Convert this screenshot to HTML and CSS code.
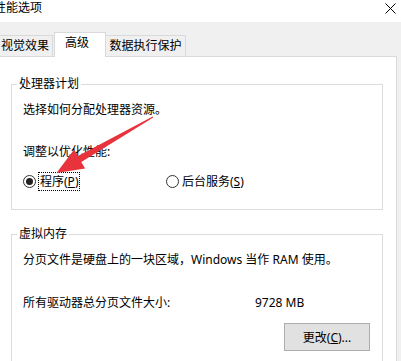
FILE: index.html
```html
<!DOCTYPE html>
<html lang="zh-CN">

<head>
  <meta charset="UTF-8">
  <meta name="viewport" content="width=device-width, initial-scale=1.0">
  <title>性能选项</title>
  <link rel="stylesheet" href="styles.css">
</head>

<body>
  <div class="window">
    <div class="titlebar">
      <span class="title">性能选项</span>
      <svg class="close" width="11" height="11" viewBox="0 0 11 11">
        <path d="M0.5 0.5 L10.5 10.5 M10.5 0.5 L0.5 10.5" stroke="#000" stroke-width="1" fill="none" />
      </svg>
    </div>

    <div class="tabs">
      <div class="tab tab_1">视觉效果</div>
      <div class="tab tab_2 active">高级</div>
      <div class="tab tab_3">数据执行保护</div>
    </div>

    <div class="panel">
      <fieldset class="group cpu">
        <legend>处理器计划</legend>
        <p class="line">选择如何分配处理器资源。</p>
        <p class="line adjust">调整以优化性能:</p>
        <div class="radios">
          <label class="radio radio_1">
            <span class="dot checked"></span>
            <span class="focus">程序(<u>P</u>)</span>
          </label>
          <label class="radio">
            <span class="dot"></span>
            <span class="label">后台服务(<u>S</u>)</span>
          </label>
        </div>
      </fieldset>

      <fieldset class="group mem">
        <legend>虚拟内存</legend>
        <p class="line">分页文件是硬盘上的一块区域，Windows 当作 RAM 使用。</p>
        <div class="line total">
          <span class="total_label">所有驱动器总分页文件大小:</span>
          <span class="total_value">9728 MB</span>
        </div>
        <div class="actions">
          <button type="button" class="change_btn">更改(<u>C</u>)...</button>
        </div>
      </fieldset>
    </div>

    <!-- red arrow drawn on top of the screenshot -->
    <svg class="arrow" width="401" height="361" viewBox="0 0 401 361">
      <polygon fill="#e8323c"
        points="153.3,117.4 81.3,162.1 85.1,168.6 56.5,173 74.1,149.5 77.9,156.1 152.7,116.6" />
    </svg>
  </div>
</body>

</html>
```

FILE: styles.css
```css
* {
  box-sizing: border-box;
}

body {
  margin: 0;
  width: 401px;
  height: 361px;
  overflow: hidden;

  background-color: #f0f0f0;
  color: #000;
  font-family: "Noto Sans", "Noto Sans CJK SC", sans-serif;
  font-size: 12px;
  line-height: 16px;
}

.window {
  position: relative;
  width: 401px;
  height: 361px;
}

.titlebar {
  height: 22px;

  display: flex;
  justify-content: space-between;
  align-items: flex-start;

  background-color: #fff;
}

.title {
  margin-left: -6px;
}

.close {
  margin-top: 3px;
  margin-right: 5px;
}

.tabs {
  height: 35px;
  margin-left: -3px;
  margin-bottom: -1px;

  display: flex;
  align-items: flex-start;
}

.tab {
  height: 21px;
  margin-top: 13px;
  padding-top: 2px;

  text-align: center;
  border: 1px solid #d9d9d9;
  border-bottom: none;
}

.tab_1 {
  width: 56px;
  margin-right: 1px;
}

.tab_2 {
  width: 52px;
}

.tab_3 {
  width: 80px;
  border-left: none;
}

.tab.active {
  position: relative;
  z-index: 2;

  height: 25px;
  margin-top: 10px;
  padding-top: 2px;
  padding-right: 6px;

  background-color: #fff;
}

.panel {
  position: relative;
  z-index: 1;

  width: 397px;
  height: 305px;

  background-color: #fff;
  border-top: 1px solid #d9d9d9;
  border-right: 1px solid #d9d9d9;
}

.group {
  width: 372px;
  margin: 0 0 0 11px;
  padding: 10px 12px 18px 11px;

  border: 1px solid #dcdcdc;
}

.group legend {
  margin-left: -6px;
  padding: 0 2px;
}

.cpu {
  margin-top: 19px;
}

.mem {
  margin-top: 16px;
}

.line {
  margin: 0;
}

.adjust {
  margin-top: 26px;
}

.radios {
  height: 19px;
  margin-top: 12px;

  display: flex;
  align-items: center;
}

.radio {
  display: flex;
  align-items: center;
}

.radio_1 {
  width: 143px;
}

.dot {
  width: 13px;
  height: 13px;
  margin-right: 3px;

  display: flex;
  justify-content: center;
  align-items: center;

  border: 1px solid #333;
  border-radius: 50%;
}

.radio_1 .dot {
  margin-right: 2px;
}

.dot.checked::after {
  content: "";
  width: 7px;
  height: 7px;

  border-radius: 50%;
  background-color: #222;
}

.focus {
  height: 19px;
  padding: 0 1px;

  line-height: 17px;
  border: 1px dotted #000;
}

.total {
  margin-top: 27px;

  display: flex;
}

.total_label {
  width: 232px;
}

.actions {
  margin-top: 12px;

  display: flex;
  justify-content: flex-end;
}

.change_btn {
  width: 86px;
  height: 28px;
  padding: 0;

  font-family: inherit;
  font-size: 12px;
  color: #000;

  background-color: #e1e1e1;
  border: 1px solid #adadad;
  border-radius: 0;
}

.arrow {
  position: absolute;
  top: 0;
  left: 0;
  z-index: 3;
}
```
